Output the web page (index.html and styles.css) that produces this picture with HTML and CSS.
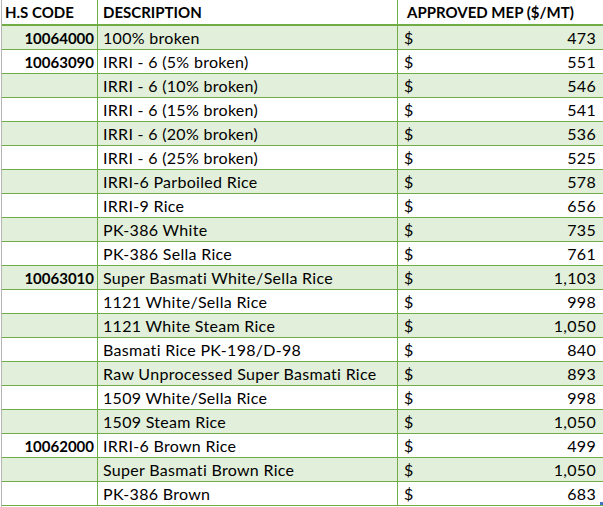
FILE: index.html
```html
<!DOCTYPE html>
<html>
<head>
<meta charset="utf-8">
<link rel="stylesheet" href="styles.css">
</head>
<body>
<div class="sheet">
  <div class="row head">
    <div class="c code">H.S CODE</div>
    <div class="c desc">DESCRIPTION</div>
    <div class="c mep">APPROVED MEP ($/MT)</div>
  </div>
  <div class="row alt"><div class="c code">10064000</div><div class="c desc">100% broken</div><div class="c mep"><span>$</span><span>473</span></div></div>
  <div class="row"><div class="c code">10063090</div><div class="c desc">IRRI - 6 (5% broken)</div><div class="c mep"><span>$</span><span>551</span></div></div>
  <div class="row alt"><div class="c code"></div><div class="c desc">IRRI - 6 (10% broken)</div><div class="c mep"><span>$</span><span>546</span></div></div>
  <div class="row"><div class="c code"></div><div class="c desc">IRRI - 6 (15% broken)</div><div class="c mep"><span>$</span><span>541</span></div></div>
  <div class="row alt"><div class="c code"></div><div class="c desc">IRRI - 6 (20% broken)</div><div class="c mep"><span>$</span><span>536</span></div></div>
  <div class="row"><div class="c code"></div><div class="c desc">IRRI - 6 (25% broken)</div><div class="c mep"><span>$</span><span>525</span></div></div>
  <div class="row alt"><div class="c code"></div><div class="c desc">IRRI-6 Parboiled Rice</div><div class="c mep"><span>$</span><span>578</span></div></div>
  <div class="row"><div class="c code"></div><div class="c desc">IRRI-9 Rice</div><div class="c mep"><span>$</span><span>656</span></div></div>
  <div class="row alt"><div class="c code"></div><div class="c desc">PK-386 White</div><div class="c mep"><span>$</span><span>735</span></div></div>
  <div class="row"><div class="c code"></div><div class="c desc">PK-386 Sella Rice</div><div class="c mep"><span>$</span><span>761</span></div></div>
  <div class="row alt"><div class="c code">10063010</div><div class="c desc">Super Basmati White/Sella Rice</div><div class="c mep"><span>$</span><span>1,103</span></div></div>
  <div class="row"><div class="c code"></div><div class="c desc">1121 White/Sella Rice</div><div class="c mep"><span>$</span><span>998</span></div></div>
  <div class="row alt"><div class="c code"></div><div class="c desc">1121 White Steam Rice</div><div class="c mep"><span>$</span><span>1,050</span></div></div>
  <div class="row"><div class="c code"></div><div class="c desc">Basmati Rice PK-198/D-98</div><div class="c mep"><span>$</span><span>840</span></div></div>
  <div class="row alt"><div class="c code"></div><div class="c desc">Raw Unprocessed Super Basmati Rice</div><div class="c mep"><span>$</span><span>893</span></div></div>
  <div class="row"><div class="c code"></div><div class="c desc">1509 White/Sella Rice</div><div class="c mep"><span>$</span><span>998</span></div></div>
  <div class="row alt"><div class="c code"></div><div class="c desc">1509 Steam Rice</div><div class="c mep"><span>$</span><span>1,050</span></div></div>
  <div class="row"><div class="c code">10062000</div><div class="c desc">IRRI-6 Brown Rice</div><div class="c mep"><span>$</span><span>499</span></div></div>
  <div class="row alt"><div class="c code"></div><div class="c desc">Super Basmati Brown Rice</div><div class="c mep"><span>$</span><span>1,050</span></div></div>
  <div class="row last"><div class="c code"></div><div class="c desc">PK-386 Brown</div><div class="c mep"><span>$</span><span>683</span><i class="handle"></i></div></div>
</div>
</body>
</html>
```
FILE: styles.css
```css
html, body {
  margin: 0;
  padding: 0;
  background: #ffffff;
}
body {
  font-family: Lato, "Open Sans", sans-serif;
  font-size: 16px;
  letter-spacing: 0.3px;
  color: #000000;
  font-variant-ligatures: none;
}
.sheet {
  margin-left: 1px;
  border-left: 1px solid #b4b4b4;
  height: 507px;
  box-sizing: border-box;
}
.row {
  display: grid;
  grid-template-columns: 96px 300px 1fr;
  height: 24px;
  box-sizing: border-box;
  border-bottom: 1px solid #70ad47;
}
.row.head {
  height: 26px;
  border-bottom: 2px solid #70ad47;
  font-weight: bold;
  font-size: 15px;
  letter-spacing: 0;
}
.row.alt {
  background: #e2efda;
}
.c {
  display: flex;
  align-items: center;
  box-sizing: border-box;
  white-space: nowrap;
  overflow: hidden;
}
.code {
  border-right: 1px solid #70ad47;
  justify-content: flex-end;
  padding-right: 3px;
  font-weight: bold;
  font-size: 15px;
  letter-spacing: 0;
}
.head .code {
  justify-content: flex-start;
  padding-left: 3px;
}
.desc {
  border-right: 1px solid #70ad47;
  padding-left: 5px;
}
.mep {
  justify-content: space-between;
  padding-left: 6px;
  padding-right: 7px;
  position: relative;
}
.head .mep {
  justify-content: flex-start;
  padding-left: 9px;
}
.handle {
  position: absolute;
  right: 0;
  bottom: 0;
  width: 3px;
  height: 3px;
  background: #4472c4;
}
```
